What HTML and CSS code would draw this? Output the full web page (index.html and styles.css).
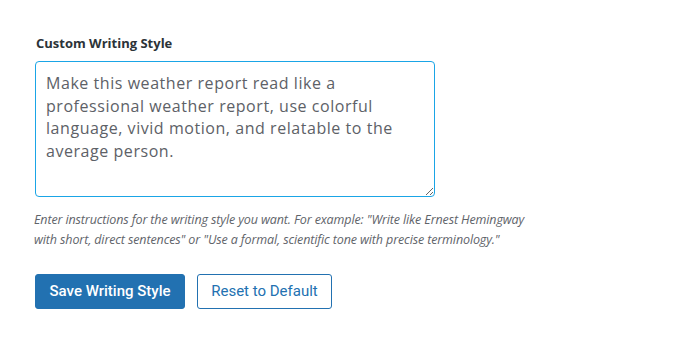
FILE: index.html
```html
<!DOCTYPE html>
<html lang="en">
<head>
<meta charset="utf-8">
<title>Custom Writing Style</title>
<link rel="stylesheet" href="styles.css">
</head>
<body>
<div class="panel">
  <label class="field-label" for="style">Custom Writing Style</label>
  <textarea id="style" class="style-input">Make this weather report read like a professional weather report, use colorful language, vivid motion, and relatable to the average person.</textarea>
  <p class="description">Enter instructions for the writing style you want. For example: "Write like Ernest Hemingway with short, direct sentences" or "Use a formal, scientific tone with precise terminology."</p>
  <div class="actions">
    <button class="btn btn-primary" type="button">Save Writing Style</button>
    <button class="btn btn-secondary" type="button">Reset to Default</button>
  </div>
</div>
</body>
</html>
```

FILE: styles.css
```css
html, body {
  margin: 0;
  padding: 0;
  background: #ffffff;
}

.panel {
  padding: 34px 0 0 35px;
  font-family: "Open Sans", "Noto Sans", sans-serif;
  color: #3c434a;
}

.field-label {
  display: block;
  font-size: 13px;
  font-weight: 700;
  line-height: 18px;
  color: #2c3338;
  margin-left: 1px;
  margin-bottom: 9px;
}

.style-input {
  display: block;
  box-sizing: border-box;
  width: 400px;
  height: 136px;
  margin: 0;
  padding: 10px 10px;
  border: 1px solid #1aa5e6;
  border-radius: 4px;
  font-family: "Open Sans", "Noto Sans", sans-serif;
  font-size: 16px;
  letter-spacing: 0.55px;
  line-height: 22.5px;
  color: #5d6167;
  background: #ffffff;
  outline: none;
  resize: both;
}

.description {
  margin: 13px 0 0 -1px;
  width: 515px;
  font-size: 12.5px;
  font-style: italic;
  letter-spacing: -0.12px;
  line-height: 20px;
  color: #5f646a;
}

.actions {
  display: flex;
  gap: 12px;
  margin-top: 24px;
}

.btn {
  box-sizing: border-box;
  height: 35px;
  padding: 0;
  border-radius: 3px;
  border: 1px solid #2271b1;
  font-family: Roboto, "Liberation Sans", sans-serif;
  font-size: 15px;
  line-height: 33px;
  cursor: pointer;
}

.btn-primary {
  background: #2271b1;
  color: #ffffff;
  width: 150px;
  font-weight: 500;
}

.btn-secondary {
  background: #ffffff;
  color: #2271b1;
  width: 135px;
}
```
